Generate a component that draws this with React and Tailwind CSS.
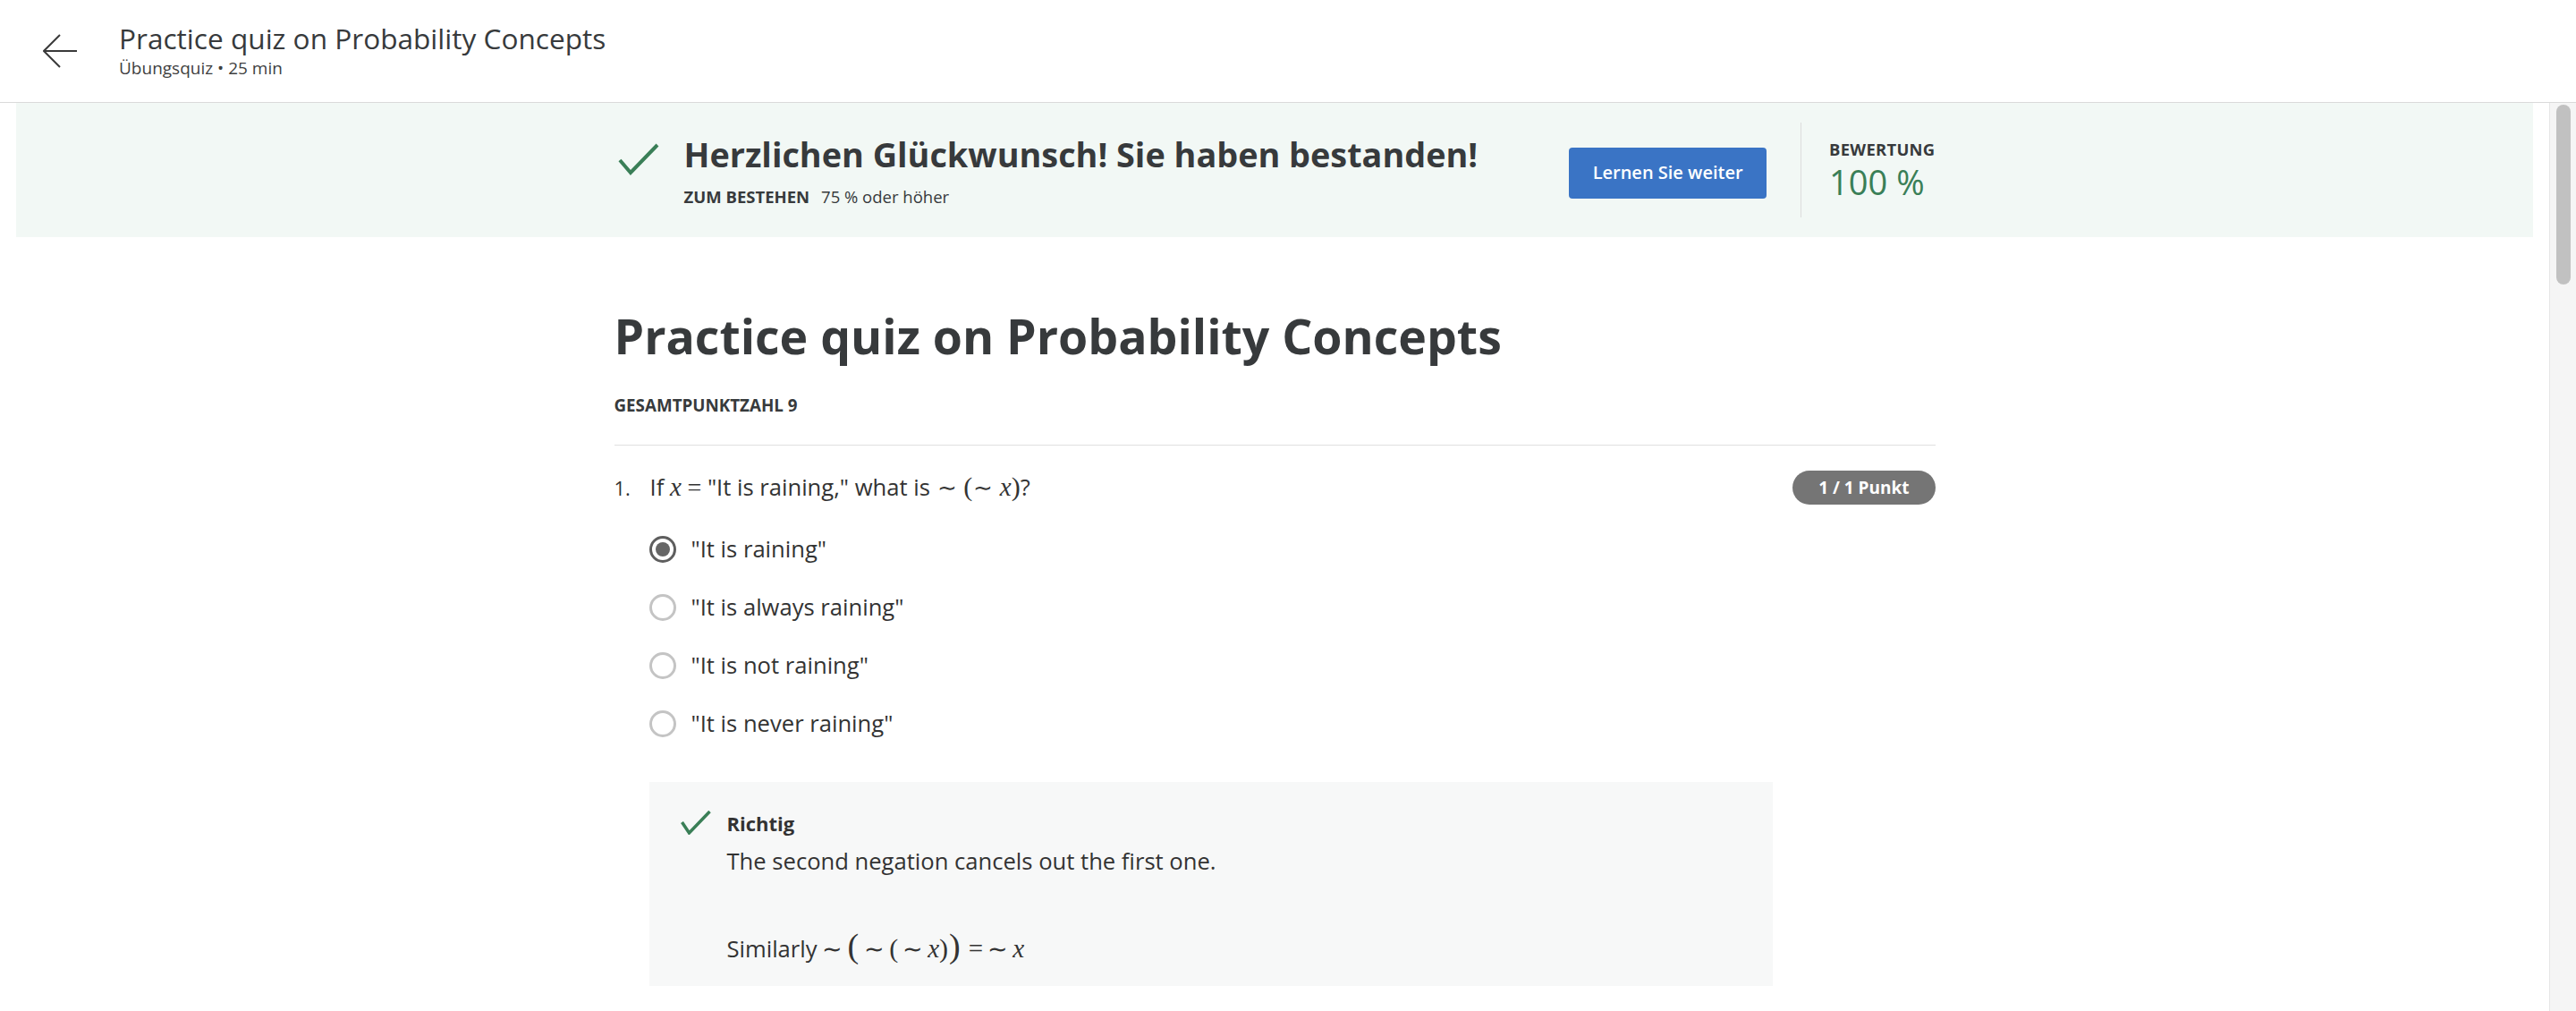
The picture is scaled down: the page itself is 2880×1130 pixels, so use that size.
import React from 'react'

const options = [
  { id: 'a', label: '"It is raining"', selected: true },
  { id: 'b', label: '"It is always raining"' },
  { id: 'c', label: '"It is not raining"' },
  { id: 'd', label: '"It is never raining"' },
]

function MathX() {
  return <span className="font-['Liberation_Serif',serif] text-[29px] italic leading-none">x</span>
}

function Tilde({ wide }) {
  return (
    <span className={wide ? "mx-[5px] font-['Liberation_Serif',serif] text-[27px] leading-none" : "mx-[1px] font-['Liberation_Serif',serif] text-[26px] leading-none"}>
      ∼
    </span>
  )
}

function Paren({ children, big }) {
  return (
    <span
      className={
        big
          ? "mx-[1px] font-['Liberation_Serif',serif] text-[38px] font-light leading-none"
          : "font-['Liberation_Serif',serif] text-[30px] leading-none"
      }
    >
      {children}
    </span>
  )
}

function Check({ className, width, height, points, stroke }) {
  return (
    <svg className={className} width={width} height={height} viewBox={`0 0 ${width} ${height}`} fill="none">
      <polyline points={points} stroke="#3a7f57" strokeWidth={stroke} strokeLinecap="butt" strokeLinejoin="miter" />
    </svg>
  )
}

function Radio({ selected }) {
  return (
    <svg width="30" height="30" viewBox="0 0 30 30" className="shrink-0">
      <circle cx="15" cy="15" r="13.5" fill="white" stroke={selected ? '#5e5e5e' : '#c4c4c4'} strokeWidth="3" />
      {selected && <circle cx="15" cy="15" r="8" fill="#666666" />}
    </svg>
  )
}

export default function App() {
  return (
    <div className="flex h-[1130px] w-[2880px] flex-col overflow-hidden bg-white font-['Open_Sans',sans-serif] text-[#333333]">
      <header className="flex h-[115px] shrink-0 items-center border-b border-[#dadada]">
        <button className="ml-[48px] flex h-[40px] w-[40px] items-center justify-center">
          <svg width="40" height="40" viewBox="0 0 40 40" fill="none">
            <path d="M1 20H38M19 2L1 20L19 38" stroke="#3a3a3a" strokeWidth="2" />
          </svg>
        </button>
        <div className="mb-[4px] ml-[45px] flex flex-col">
          <h1 className="text-[31.6px] leading-[40px] text-[#373a3c]">Practice quiz on Probability Concepts</h1>
          <p className="mt-[1px] text-[19px] leading-[24px] text-[#3f3f3f]">Übungsquiz • 25 min</p>
        </div>
      </header>

      <div className="flex min-h-0 flex-1">
        <main className="min-w-0 flex-1 overflow-hidden px-[18px]">
          <section className="flex h-[150px] items-center bg-[#f2f8f5]">
            <div className="mx-auto flex w-[1477px] items-center justify-between">
              <div className="mt-[14px] flex items-start self-start">
                <Check className="ml-[4px] mt-[9px] shrink-0" width={46} height={36} points="2,19 14,33 44,2" stroke={4} />
                <div className="ml-[28px] flex flex-col">
                  <h2 className="text-[37.8px] font-bold leading-[44px] text-[#373a3c]">
                    Herzlichen Glückwunsch! Sie haben bestanden!
                  </h2>
                  <p className="mt-[13px] flex gap-[13px] text-[18.5px] leading-[24px] text-[#373a3c]">
                    <span className="font-bold">ZUM BESTEHEN</span>
                    <span>75 % oder höher</span>
                  </p>
                </div>
              </div>
              <div className="flex items-center">
                <button className="mt-[6px] h-[57px] w-[221px] rounded-[4px] bg-[#3a74c5] text-[20px] font-semibold text-white">
                  Lernen Sie weiter
                </button>
                <div className="ml-[38px] h-[106px] w-px bg-[#dcdcdc]" />
                <div className="ml-[31px] flex flex-col">
                  <span className="text-[18.4px] font-bold leading-[22px] tracking-[0.3px] text-[#373a3c]">BEWERTUNG</span>
                  <span className="mt-[3px] text-[38px] leading-[44px] text-[#3a7f57]">100 %</span>
                </div>
              </div>
            </div>
          </section>

          <div className="mx-auto w-[1477px]">
            <h1 className="mt-[79px] text-[53.6px] font-bold leading-[64px] text-[#373a3c]">
              Practice quiz on Probability Concepts
            </h1>
            <p className="mt-[33px] text-[18.8px] font-bold leading-[24px] text-[#373a3c]">GESAMTPUNKTZAHL 9</p>
            <hr className="mt-[32px] border-t border-[#e0e0e0]" />

            <div className="mt-[28px] flex items-start justify-between">
              <div className="flex items-baseline">
                <span className="w-[40px] text-[22px]">1.</span>
                <p className="h-[38.4px] text-[25.6px] leading-[38.4px]">
                  If <MathX /> <span className="font-['Liberation_Serif',serif] text-[28px] leading-none">=</span> "It is raining," what is{' '}
                  <Tilde /> <Paren>(</Paren><Tilde /> <MathX /><Paren>)</Paren>?
                </p>
              </div>
              <span className="flex h-[38px] items-center rounded-full bg-[#757575] px-[29px] text-[19px] font-bold text-white">
                1 / 1 Punkt
              </span>
            </div>

            <ul className="mt-[17px] pl-[39px]">
              {options.map((o) => (
                <li key={o.id} className="flex h-[65px] items-center gap-[17px]">
                  <Radio selected={o.selected} />
                  <span className="text-[25.6px] leading-[38.4px]">{o.label}</span>
                </li>
              ))}
            </ul>

            <div className="ml-[39px] mt-[33px] w-[1256px] bg-[#f7f8f8] pb-[26px] pl-[35px] pt-[30px]">
              <div className="flex items-start">
                <Check className="mt-[2px] shrink-0" width={34} height={27} points="1.5,13 9.5,25 32.5,1" stroke={3.5} />
                <div className="ml-[18px] flex flex-col">
                  <span className="text-[22px] font-bold leading-[32px]">Richtig</span>
                  <p className="mt-[8px] text-[25.6px] leading-[38.4px]">The second negation cancels out the first one.</p>
                  <p className="mt-[55px] h-[38.4px] text-[25.6px] leading-[38.4px]">
                    Similarly<Tilde wide /><Paren big>(</Paren><Tilde wide /><Paren>(</Paren><Tilde wide /><MathX /><Paren>)</Paren><Paren big>)</Paren>
                    <span className="ml-[8px] font-['Liberation_Serif',serif] text-[29px] leading-none">=</span><Tilde wide /><MathX />
                  </p>
                </div>
              </div>
            </div>
          </div>
        </main>

        <div className="flex w-[30px] shrink-0 flex-col border-l border-[#e6e6e6] bg-[#f5f5f5] pt-[2px]">
          <div className="ml-[7px] h-[201px] w-[16px] rounded-full bg-[#c1c1c1]" />
        </div>
      </div>
    </div>
  )
}
